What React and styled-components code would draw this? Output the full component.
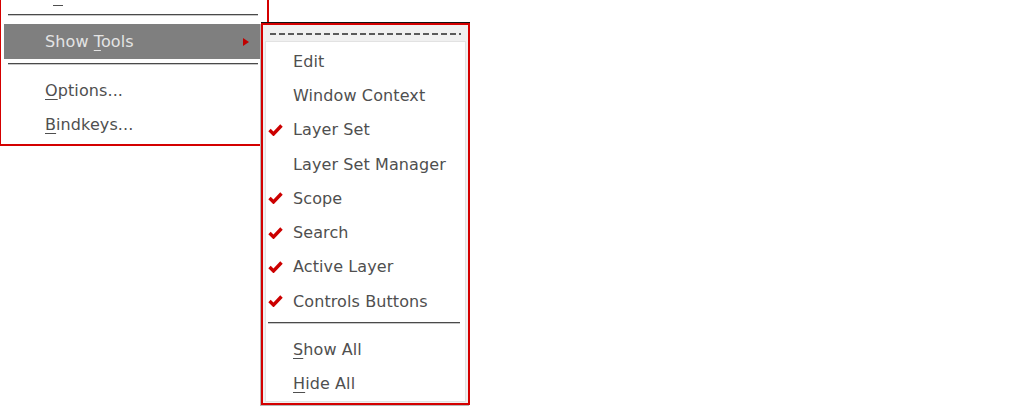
import React from 'react'
import styled, { createGlobalStyle } from 'styled-components'

const GlobalStyle = createGlobalStyle`
  html, body {
    margin: 0;
    padding: 0;
    background: #fff;
    overflow: hidden;
  }
  body {
    font-family: "DejaVu Sans", "Liberation Sans", sans-serif;
    font-size: 16px;
  }
`

const Screen = styled.div`
  position: relative;
  width: 1013px;
  height: 411px;
  overflow: hidden;
  background: #fff;
`

const MainMenu = styled.div`
  width: 260px;
  margin: -29px 0 0 -1px;
  padding: 3px;
  border: 2px solid #d40000;
  background: #fff;
  display: flex;
  flex-direction: column;
`

const Item = styled.div`
  display: flex;
  align-items: center;
  height: ${p => p.$h || 34}px;
  padding-left: ${p => p.$indent || 0}px;
  color: ${p => (p.$active ? '#e4e4e4' : '#4f4f4f')};
  background: ${p => (p.$active ? '#7f7f7f' : 'transparent')};
  white-space: nowrap;
  letter-spacing: 0.1px;
`

const Key = styled.span`
  text-decoration: underline;
  text-underline-offset: 3px;
`

/* mnemonic underline of the item scrolled out above the top edge */
const Mark = styled.span`
  display: block;
  width: 10px;
  height: 1px;
  margin: 24px 0 0 8px;
  background: #4f4f4f;
`

const Separator = styled.div`
  height: 14px;
  display: flex;
  flex-direction: column;
  padding: 4px ${p => p.$right || 6}px 0 ${p => p.$left || 4}px;
  box-sizing: border-box;

  &::before {
    content: '';
    display: block;
    height: 1px;
    background: #4a4a4a;
    border-bottom: 1px solid #c8c8c8;
  }
`

const Arrow = styled.span`
  margin-left: auto;
  margin-right: 15px;
  width: 0;
  height: 0;
  border-top: 4px solid transparent;
  border-bottom: 4px solid transparent;
  border-left: 6px solid #c00000;
`

const SubMenu = styled.div`
  position: absolute;
  left: 261px;
  top: 23px;
  width: 201px;
  padding: 0 2px 1px;
  border: 2px solid #d40000;
  background: #f0f0f0;
  box-shadow: 0 -1px 0 #111, -1px 1px 0 #b8b8b8;
`

const Tearoff = styled.div`
  height: 16px;
  padding: 8px 5px 0;
  box-sizing: border-box;

  &::before {
    content: '';
    display: block;
    height: 2px;
    background: repeating-linear-gradient(
      to right,
      #5a5a5a 0 6px,
      transparent 6px 9px
    );
  }
`

const Panel = styled.div`
  background: #fff;
  border: 1px solid #e2e2e2;
  padding: 2px 0 0;
  display: flex;
  flex-direction: column;
`

const CheckSlot = styled.span`
  width: 25px;
  flex: none;
  display: flex;
  align-items: center;
`

const Check = () => (
  <svg width="15" height="12" viewBox="0 0 15 12">
    <path d="M1.5 6 L5.5 10 L13.5 1.5" fill="none" stroke="#cc0000" strokeWidth="3.4" strokeLinejoin="miter" />
  </svg>
)

const tools = [
  { label: 'Edit', on: false },
  { label: 'Window Context', on: false },
  { label: 'Layer Set', on: true },
  { label: 'Layer Set Manager', on: false },
  { label: 'Scope', on: true },
  { label: 'Search', on: true },
  { label: 'Active Layer', on: true },
  { label: 'Controls Buttons', on: true }
]

const ToolItem = ({ children, on }) => (
  <Item $h={34.3} $indent={2}>
    <CheckSlot>{on && <Check />}</CheckSlot>
    {children}
  </Item>
)

export default function App () {
  return (
    <Screen>
      <GlobalStyle />
      <MainMenu>
        <Item $indent={41}><Mark /></Item>
        <Separator />
        <Item $indent={41} $h={35} $active>
          <span>Show <Key>T</Key>ools</span>
          <Arrow />
        </Item>
        <Separator />
        <Item $indent={41}><Key>O</Key>ptions...</Item>
        <Item $indent={41}><Key>B</Key>indkeys...</Item>
      </MainMenu>

      <SubMenu>
        <Tearoff />
        <Panel>
          {tools.map(t => (
            <ToolItem key={t.label} on={t.on}>{t.label}</ToolItem>
          ))}
          <Separator $left={2} $right={5} />
          <ToolItem><span><Key>S</Key>how All</span></ToolItem>
          <ToolItem><span><Key>H</Key>ide All</span></ToolItem>
        </Panel>
      </SubMenu>
    </Screen>
  )
}
